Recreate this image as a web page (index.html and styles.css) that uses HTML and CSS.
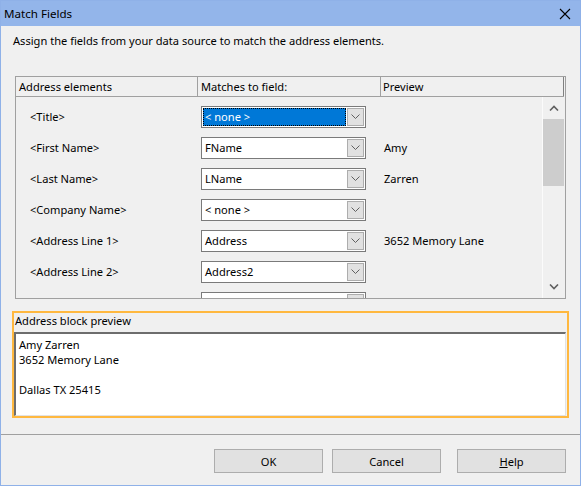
FILE: index.html
```html
<!DOCTYPE html>
<html>
<head>
<meta charset="utf-8">
<link rel="stylesheet" href="styles.css">
</head>
<body>
<div class="window">
  <div class="titlebar">
    <span class="title">Match Fields</span>
    <svg class="close" width="12" height="12" viewBox="0 0 12 12"><path d="M1 1 L11 11 M11 1 L1 11" stroke="#000" stroke-width="1.1" fill="none"/></svg>
  </div>
  <div class="instruction">Assign the fields from your data source to match the address elements.</div>

  <div class="listview">
    <div class="lv-header">
      <div class="hcol">Address elements</div>
      <div class="hcol">Matches to field:</div>
      <div class="hcol last">Preview</div>
    </div>
    <div class="lv-body">
      <div class="rows">
        <div class="row">
          <div class="label">&lt;Title&gt;</div>
          <div class="combo selected"><span class="value">&lt; none &gt;</span><span class="drop"><svg width="9" height="5" viewBox="0 0 9 5"><path d="M0.5 0.5 L4.5 4.5 L8.5 0.5" stroke="#606060" fill="none"/></svg></span></div>
          <div class="prev"></div>
        </div>
        <div class="row">
          <div class="label">&lt;First Name&gt;</div>
          <div class="combo"><span class="value">FName</span><span class="drop"><svg width="9" height="5" viewBox="0 0 9 5"><path d="M0.5 0.5 L4.5 4.5 L8.5 0.5" stroke="#606060" fill="none"/></svg></span></div>
          <div class="prev">Amy</div>
        </div>
        <div class="row">
          <div class="label">&lt;Last Name&gt;</div>
          <div class="combo"><span class="value">LName</span><span class="drop"><svg width="9" height="5" viewBox="0 0 9 5"><path d="M0.5 0.5 L4.5 4.5 L8.5 0.5" stroke="#606060" fill="none"/></svg></span></div>
          <div class="prev">Zarren</div>
        </div>
        <div class="row">
          <div class="label">&lt;Company Name&gt;</div>
          <div class="combo"><span class="value">&lt; none &gt;</span><span class="drop"><svg width="9" height="5" viewBox="0 0 9 5"><path d="M0.5 0.5 L4.5 4.5 L8.5 0.5" stroke="#606060" fill="none"/></svg></span></div>
          <div class="prev"></div>
        </div>
        <div class="row">
          <div class="label">&lt;Address Line 1&gt;</div>
          <div class="combo"><span class="value">Address</span><span class="drop"><svg width="9" height="5" viewBox="0 0 9 5"><path d="M0.5 0.5 L4.5 4.5 L8.5 0.5" stroke="#606060" fill="none"/></svg></span></div>
          <div class="prev">3652 Memory Lane</div>
        </div>
        <div class="row">
          <div class="label">&lt;Address Line 2&gt;</div>
          <div class="combo"><span class="value">Address2</span><span class="drop"><svg width="9" height="5" viewBox="0 0 9 5"><path d="M0.5 0.5 L4.5 4.5 L8.5 0.5" stroke="#606060" fill="none"/></svg></span></div>
          <div class="prev"></div>
        </div>
        <div class="row">
          <div class="label">&lt;City&gt;</div>
          <div class="combo"><span class="value">City</span><span class="drop"><svg width="9" height="5" viewBox="0 0 9 5"><path d="M0.5 0.5 L4.5 4.5 L8.5 0.5" stroke="#606060" fill="none"/></svg></span></div>
          <div class="prev">Dallas</div>
        </div>
      </div>
      <div class="scrollbar">
        <div class="sb-arrow"><svg width="10" height="6" viewBox="0 0 10 6"><path d="M1 5.5 L5 1.5 L9 5.5" stroke="#606060" stroke-width="1.6" fill="none"/></svg></div>
        <div class="sb-thumb"></div>
        <div class="sb-track"></div>
        <div class="sb-arrow"><svg width="10" height="6" viewBox="0 0 10 6"><path d="M1 0.5 L5 4.5 L9 0.5" stroke="#606060" stroke-width="1.6" fill="none"/></svg></div>
      </div>
    </div>
  </div>

  <div class="preview-group">
    <div class="pg-label">Address block preview</div>
    <div class="pg-box">
      <div>Amy Zarren</div>
      <div>3652 Memory Lane</div>
      <div>&nbsp;</div>
      <div>Dallas TX 25415</div>
    </div>
  </div>

  <div class="separator"></div>

  <div class="buttons">
    <button class="btn">OK</button>
    <button class="btn">Cancel</button>
    <button class="btn help"><u>H</u>elp</button>
  </div>
</div>
</body>
</html>
```

FILE: styles.css
```css
* { box-sizing: border-box; }
html, body { margin: 0; padding: 0; }
body {
  font-family: "Noto Sans", "Open Sans", sans-serif;
  font-size: 11.1px;
  color: #000;
  background: #f0f0f0;
}
.window {
  width: 581px;
  height: 486px;
  border: 1px solid #8fb1e8;
  background: #f0f0f0;
  display: flex;
  flex-direction: column;
}
.titlebar {
  height: 25px;
  background: #93b5ea;
  display: flex;
  align-items: center;
  justify-content: space-between;
  padding: 0 9px 0 3px;
  font-size: 11.6px;
}
.title { line-height: 16px; }
.close { display: block; }
.instruction {
  margin: 7px 0 0 12px;
  line-height: 16px;
}
.listview {
  margin: 27px 0 0 14px;
  width: 551px;
  height: 223px;
  border: 1px solid #a0a0a0;
  background: #f0f0f0;
  display: flex;
  flex-direction: column;
}
.lv-header {
  height: 20px;
  display: grid;
  grid-template-columns: 182px 183px 1fr;
  border-bottom: 1px solid #a0a0a0;
  margin-right: 1px;
}
.hcol {
  border-right: 1px solid #a0a0a0;
  padding-left: 3px;
  line-height: 19px;
}
.hcol.last { padding-left: 2px; border-right: 1px solid #808080; }
.lv-body {
  flex: 1;
  display: flex;
  overflow: hidden;
}
.rows {
  width: 526px;
  overflow: hidden;
  padding-top: 4px;
}
.row {
  height: 31px;
  display: grid;
  grid-template-columns: 182px 183px 1fr;
  align-items: center;
}
.label { padding-left: 14px; }
.prev { padding-left: 3px; }
.combo {
  margin-left: 3px;
  width: 165px;
  height: 22px;
  border: 1px solid #7a7a7a;
  background: #fff;
  display: flex;
  align-items: stretch;
  padding: 1px;
}
.combo .value {
  flex: 1;
  padding-left: 2px;
  line-height: 18px;
}
.combo.selected .value {
  background: #0078d7;
  color: #fff;
  outline: 1px dotted #000;
  outline-offset: -1px;
}
.combo .drop {
  width: 17px;
  margin-left: 1px;
  background: #e1e1e1;
  border: 1px solid #adadad;
  display: flex;
  align-items: center;
  justify-content: center;
}
.combo .drop svg { display: block; }
.scrollbar {
  width: 23px;
  border-left: 1px solid #fbfbfb;
  display: flex;
  flex-direction: column;
}
.sb-arrow {
  height: 22px;
  display: flex;
  align-items: center;
  justify-content: center;
}
.sb-thumb {
  height: 67px;
  background: #cdcdcd;
  margin-right: 1px;
}
.sb-track { flex: 1; }
.preview-group {
  margin: 12px 0 0 11px;
  width: 557px;
  height: 107px;
  border: 2px solid #ffb83f;
  display: flex;
  flex-direction: column;
}
.pg-label {
  height: 19px;
  padding-left: 1px;
  line-height: 15px;
}
.pg-box {
  flex: 1;
  margin-right: 1px;
  background: #fff;
  border-top: 2px solid #6d6d6d;
  border-left: 2px solid #6d6d6d;
  border-right: 1px solid #e3e3e3;
  border-bottom: 1px solid #e3e3e3;
  padding: 3px 0 0 3px;
  line-height: 15px;
}
.separator {
  margin-top: 16px;
  height: 1px;
  background: #a0a0a0;
}
.buttons {
  margin-top: 14px;
  display: flex;
  justify-content: flex-end;
  padding-right: 14px;
}
.btn {
  width: 109px;
  height: 24px;
  margin: 0 0 0 9px;
  padding: 0;
  border: 1px solid #adadad;
  background: #e1e1e1;
  font-family: inherit;
  font-size: 11.1px;
  color: #000;
}
.btn.help { margin-left: 16px; }
```
